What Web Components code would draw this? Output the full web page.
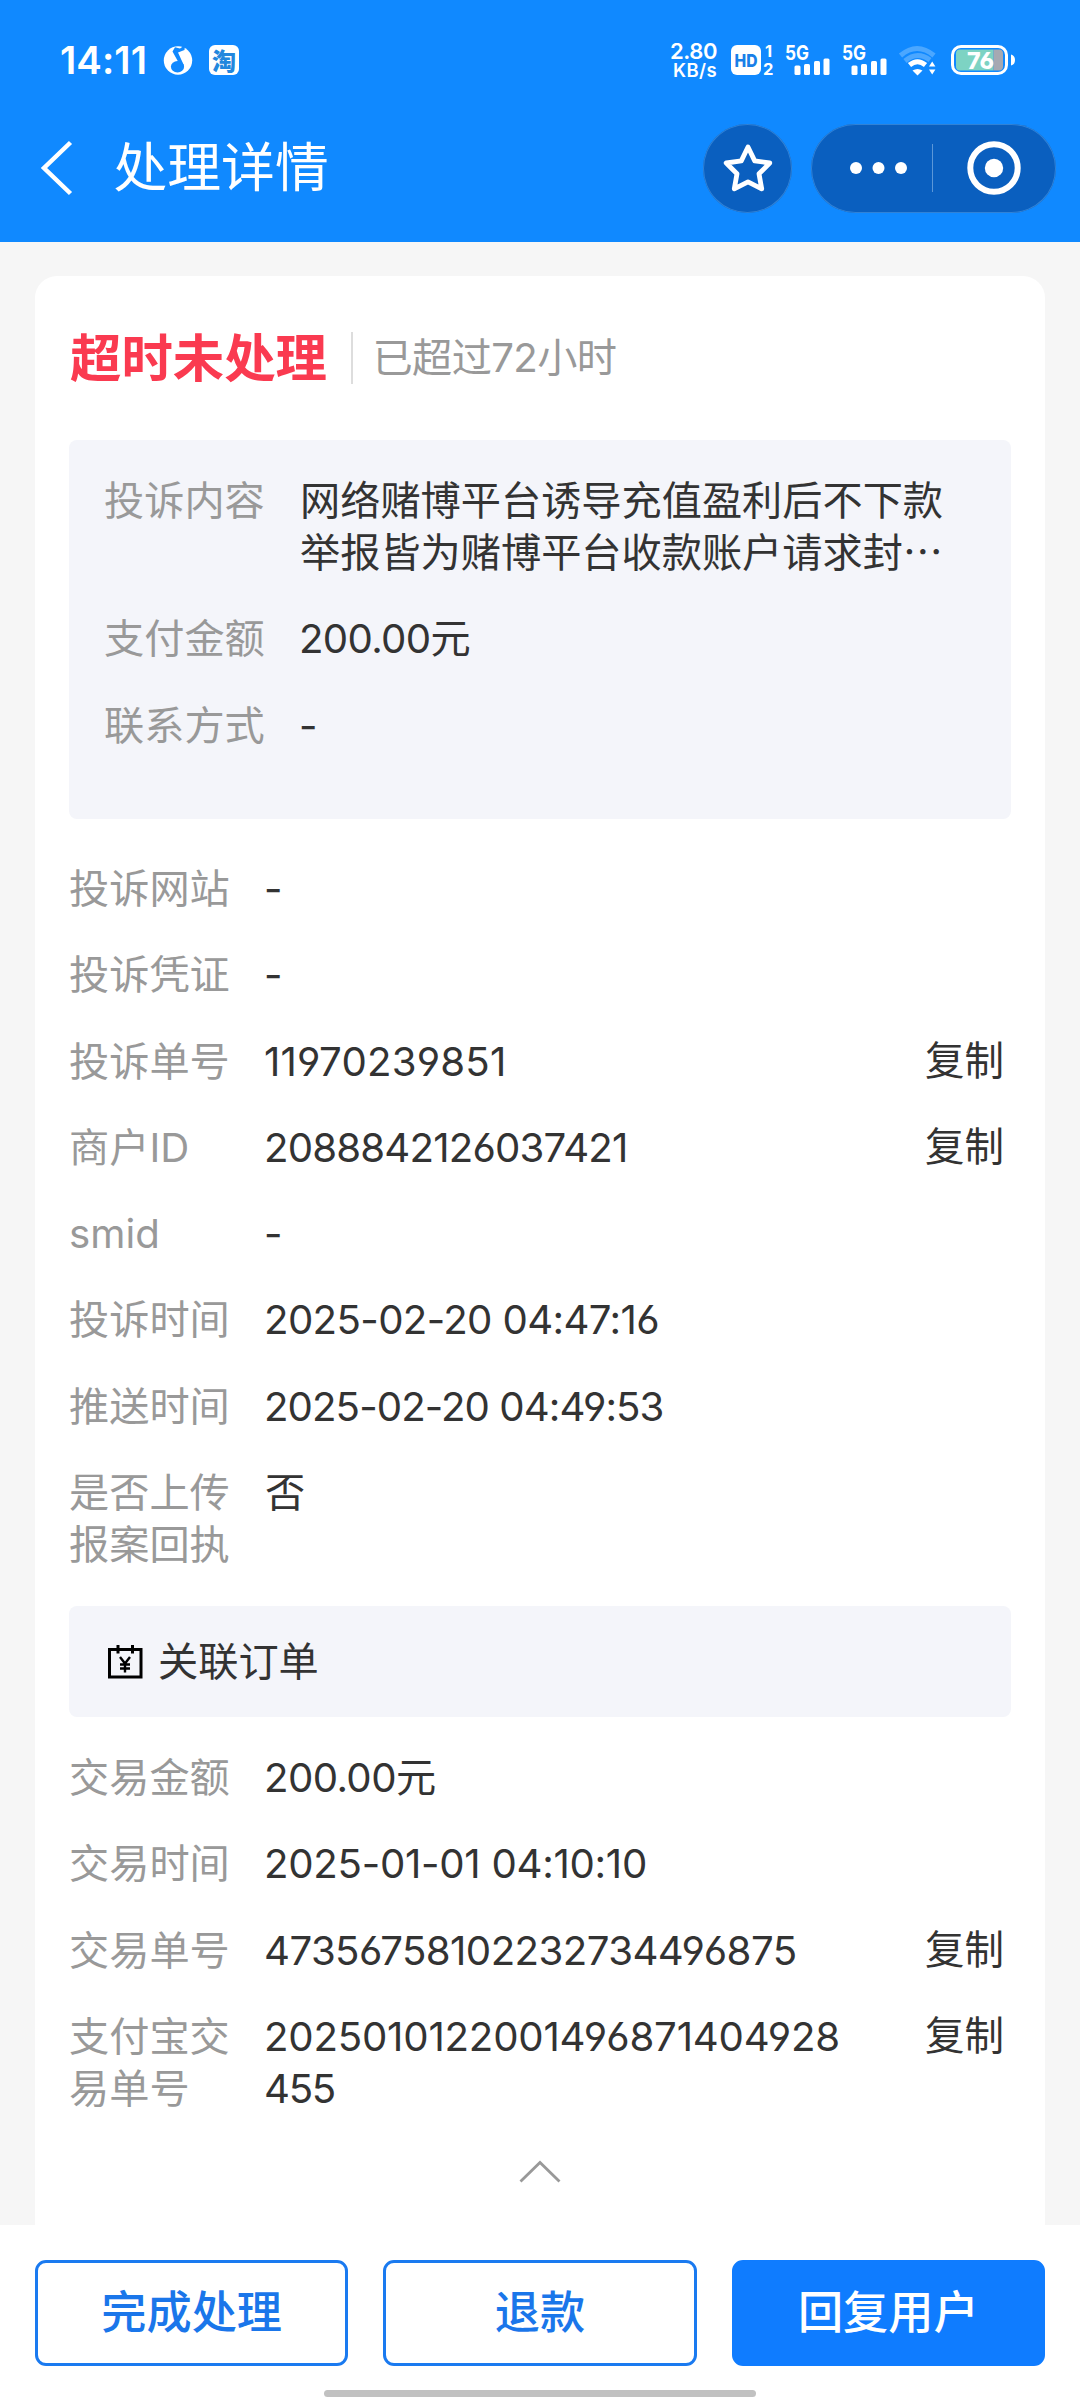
<!DOCTYPE html>
<html lang="zh-CN">
<head>
<meta charset="utf-8">
<title>处理详情</title>
<style>
html,body{margin:0;padding:0}
body{width:1080px;height:2400px;overflow:hidden;background:#f6f6f6;color:#333;
 font-family:Inter,"Noto Sans CJK SC",sans-serif;font-size:40.2px;line-height:52px;
 font-feature-settings:"cv03","cv04";}
</style>
</head>
<body>
<detail-page></detail-page>
<script>
const define = (name, html, after) => customElements.define(name, class extends HTMLElement {
  connectedCallback() {
    if (this.shadowRoot) return;
    const t = document.createElement('template');
    t.innerHTML = typeof html === 'function' ? html(this) : html;
    this.attachShadow({mode: 'open'}).appendChild(t.content.cloneNode(true));
    if (after) after(this);
  }
});

/* One line of text whose tracking is set so that it measures w pixels */
define('tracked-text', `<style>:host{display:inline-block;white-space:nowrap;vertical-align:baseline}</style><span><slot></slot></span>`, el => {
  const s = el.shadowRoot.querySelector('span');
  const w = parseFloat(el.getAttribute('w'));
  const n = [...el.textContent].length;
  const nat = s.getBoundingClientRect().width;
  s.style.letterSpacing = ((w - nat) / n).toFixed(3) + 'px';
});

define('signal-5g', `<style>:host{display:block;width:45px;height:32px}svg{display:block;overflow:visible}</style>
<svg width="45" height="32" viewBox="0 0 45 32" fill="#fff"><text x="0" y="15.5" font-family="Inter" font-weight="700" font-size="20" textLength="24" lengthAdjust="spacingAndGlyphs">5G</text>
<rect x="9.5" y="21.500" width="6" height="9.500" rx="1.500"/><rect x="19" y="20" width="6" height="11" rx="1.500"/><rect x="29" y="17" width="6" height="14" rx="1.500"/><rect x="38.500" y="14.500" width="6" height="16.500" rx="1.500"/></svg>`);

define('status-bar', `<style>
:host{display:flex;height:120px;box-sizing:border-box;padding:44px 64px 0 60px;color:#fff;align-items:flex-start}
svg{display:block;flex:none;overflow:visible}
.time{font-weight:600;font-size:38.5px;line-height:32px;width:87px}
.music{margin-left:16px}
.tao{margin:1px 0 0 16px;width:30px;height:30px;border-radius:6px;background:#fff;color:#2387dd;font:900 24px/30px "Noto Sans CJK SC",sans-serif;text-align:center}
.speed{margin-left:auto;width:47px;margin-top:-4px;display:flex;flex-direction:column;align-items:flex-end;font-weight:600}
.speed tracked-text{display:block;font-size:22px;line-height:22px}
.speed tracked-text+tracked-text{font-size:18.500px;line-height:16px}
.hd{margin-left:14px}.s1{margin-left:11px}.s2{margin-left:12px}.wifi{margin-left:12px}.bat{margin-left:15px}
</style>
<div class="time"><tracked-text w="87">14:11</tracked-text></div>
<svg class="music" width="30" height="32" viewBox="0 0 30 32"><circle cx="15" cy="16.500" r="14.200" fill="#fff"/><g fill="#1089ff"><ellipse cx="14.500" cy="22.800" rx="6.600" ry="5.700"/><path d="M9.500 7.500L12 3.300 17 4.500 22 1 21.500 6 15 8.500 21 21.500 18 23 15 17.500Z"/></g></svg>
<div class="tao">淘</div>
<div class="speed"><tracked-text w="47">2.80</tracked-text><tracked-text w="44">KB/s</tracked-text></div>
<svg class="hd" width="43" height="32" viewBox="0 0 43 32"><rect y="1" width="30" height="30" rx="6" fill="#fff"/><text x="3.500" y="22.500" font-family="Inter" font-weight="800" font-size="18" fill="#1980e8" textLength="23" lengthAdjust="spacingAndGlyphs">HD</text><g fill="#fff" font-family="Inter" font-weight="700" font-size="16.500"><text x="34" y="13">1</text><text x="32" y="31">2</text></g></svg>
<signal-5g class="s1"></signal-5g><signal-5g class="s2"></signal-5g>
<svg class="wifi" width="37" height="32" viewBox="0 0 37 32" fill="none"><g stroke="#4ba7ff" stroke-width="5"><path d="M1.500 11.500Q18 -2.500 35 11.500"/><path d="M6 17Q18 6.500 31 16"/></g><path d="M10.500 21Q18.500 14.500 26.500 21" stroke="#fff" stroke-width="5"/><path d="M13.500 26.500Q18.500 23.500 23.500 26.500L18.500 31.500Z" fill="#fff"/><path d="M30 22.500L33.200 17.500 36.400 22.500ZM30 25.500L33.200 30.500 36.400 25.500Z" fill="#fff"/></svg>
<svg class="bat" width="65" height="32" viewBox="0 0 65 32"><rect x="1.500" y="2.500" width="54" height="27" rx="8.500" fill="none" stroke="#fff" stroke-width="3"/><path d="M9 5.500H42.500V26.500H9Q5 26.500 5 22.500V9.500Q5 5.500 9 5.500Z" fill="#7dd3c3"/><path d="M42.500 5.500H48Q52 5.500 52 9.500V22.500Q52 26.500 48 26.500H42.500Z" fill="#a6a9b2"/><path d="M60 10.500Q64 11.500 64 16Q64 20.500 60 21.500Z" fill="#fff"/><text x="29.500" y="24.500" text-anchor="middle" font-family="Inter" font-weight="800" font-size="23.500" textLength="27" lengthAdjust="spacingAndGlyphs" fill="#fff">76</text></svg>`);

define('title-bar', `<style>
:host{display:flex;height:96px;align-items:center;padding:0 24px 0 38px;color:#fff}
svg{display:block;flex:none}
h1{margin:0 0 0 37.500px;font-weight:400;font-size:53.8px;line-height:64px}
.disc,.pill{background:#0a5fbf;box-shadow:0 0 0 1px #3182d6 inset;height:89px;display:flex;align-items:center;box-sizing:border-box}
.disc{width:89px;border-radius:50%;margin-left:auto;justify-content:center}
.pill{width:245px;border-radius:45px;margin-left:19px;padding-left:39px}
.sep{width:1px;height:48px;background:#5b97d8;margin:0 34px 0 25px}
</style>
<svg width="38" height="56" viewBox="0 0 38 56" fill="none" stroke="#fff" stroke-width="4.500"><path d="M32.500 2.500L6 28L32.500 53.500"/></svg>
<h1>处理详情</h1>
<div class="disc"><svg width="56" height="56" viewBox="0 0 56 56" fill="none" stroke="#fff" stroke-width="4.800" stroke-linejoin="round"><path d="M28 5L34.700 18.900 49.800 21 39 31.800 41.700 46.800 28 39.800 14.300 46.800 17 31.800 6.200 21 21.300 18.900Z" transform="translate(0 2)"/></svg></div>
<div class="pill"><svg width="57" height="14" viewBox="0 0 57 14" fill="#fff"><circle cx="6" cy="7" r="6"/><circle cx="28.500" cy="7" r="6"/><circle cx="51" cy="7" r="6"/></svg><i class="sep"></i><svg width="54" height="54" viewBox="0 0 54 54"><circle cx="27" cy="27" r="23.700" fill="none" stroke="#fff" stroke-width="6"/><circle cx="27" cy="27" r="9.200" fill="#fff"/></svg></div>`);

define('info-row', el => `<style>
:host{display:flex;align-items:flex-start;color:#333}
.label{width:162px;margin-right:34px;color:#999;flex:none;word-break:break-all}
.copy{margin:-1px 7px 0 auto;font-size:39.500px}
::slotted(tracked-text){margin-left:-1px}
</style><div class="label">${el.getAttribute('label')}</div><div class="value"><slot></slot></div>${el.hasAttribute('copy') ? '<div class="copy">复制</div>' : ''}`);

define('row-list', `<style>:host{display:flex;flex-direction:column;gap:34.300px}</style><slot></slot>`);
define('grey-panel', `<style>:host{display:block;box-sizing:border-box;background:#f4f5fa;border-radius:8px}</style><slot></slot>`);

define('status-heading', `<style>
:host{display:flex;height:164px;box-sizing:border-box;padding-bottom:1px;align-items:center}
b{font-weight:700;font-size:51.400px;line-height:60px;color:#fa3a50;margin-left:1px}
i{width:2.500px;height:52px;background:#ddd;margin:0 19px 0 24px}
span{color:#999}
</style><b>超时未处理</b><i></i><span><tracked-text w="244">已超过72小时</tracked-text></span>`);

define('action-button', `<style>
:host{display:flex;flex:1;height:106px;box-sizing:border-box;align-items:center;justify-content:center;border:3px solid #1a7af0;border-radius:11px;font-size:45.200px;font-weight:500;color:#1a76ea;background:#fff}
:host([primary]){background:#0f7cff;border-color:#0f7cff;color:#fff}
</style><slot></slot>`);

define('action-bar', `<style>
:host{display:block;height:175px;background:#fff;flex:none}
.row{display:flex;gap:35px;padding:35px 35px 0}
.home{width:432px;height:7px;border-radius:4px;background:#c1c1c1;margin:24px auto 0}
</style><div class="row"><action-button>完成处理</action-button><action-button>退款</action-button><action-button primary>回复用户</action-button></div><div class="home"></div>`);

define('detail-page', `<style>
:host{display:flex;flex-direction:column;height:2400px}
header{height:242px;background:#1089ff;flex:none}
main{flex:1;min-height:0;padding:34px 35px 0;display:flex}
section{flex:1;background:#fff;border-radius:22px 22px 0 0;padding:0 34px;box-sizing:border-box;min-width:0}
.complaint{height:379px;padding:35px 30px 0 35px}
.first{margin-top:44px}
.order{height:111px;margin-top:35px;padding-left:37px;display:flex;align-items:center;gap:14px}
.order span{padding-top:1px}
.second{margin-top:35px}
.dots{font-family:"Noto Sans CJK SC";line-height:1}
.up{display:block;margin:44px auto 0}
svg{display:block}
</style>
<header><status-bar></status-bar><title-bar></title-bar></header>
<main><section>
<status-heading></status-heading>
<grey-panel class="complaint"><row-list>
<info-row label="投诉内容">网络赌博平台诱导充值盈利后不下款<br>举报皆为赌博平台收款账户请求封<span class="dots">…</span></info-row>
<info-row label="支付金额"><tracked-text w="171">200.00元</tracked-text></info-row>
<info-row label="联系方式"><tracked-text w="18">-</tracked-text></info-row>
</row-list></grey-panel>
<row-list class="first">
<info-row label="投诉网站"><tracked-text w="18">-</tracked-text></info-row>
<info-row label="投诉凭证"><tracked-text w="18">-</tracked-text></info-row>
<info-row label="投诉单号" copy><tracked-text w="242.500">11970239851</tracked-text></info-row>
<info-row label="商户ID" copy><tracked-text w="363.500">2088842126037421</tracked-text></info-row>
<info-row label="smid"><tracked-text w="18">-</tracked-text></info-row>
<info-row label="投诉时间"><tracked-text w="395">2025-02-20 04:47:16</tracked-text></info-row>
<info-row label="推送时间"><tracked-text w="399.500">2025-02-20 04:49:53</tracked-text></info-row>
<info-row label="是否上传报案回执">否</info-row>
</row-list>
<grey-panel class="order" style="display:flex"><svg width="38" height="38" viewBox="0 0 38 38" fill="none" stroke="#000" stroke-width="3"><path d="M3.500 6.500H35V34H3.500ZM12 2V10.500M26.500 2V10.500"/><path d="M14 14L19 20.500L24 14M19 20V29.500M14 21.500H24M14 25.500H24" stroke-width="2.400"/></svg><span>关联订单</span></grey-panel>
<row-list class="second">
<info-row label="交易金额"><tracked-text w="171.500">200.00元</tracked-text></info-row>
<info-row label="交易时间"><tracked-text w="383">2025-01-01 04:10:10</tracked-text></info-row>
<info-row label="交易单号" copy><tracked-text w="532.500">47356758102232734496875</tracked-text></info-row>
<info-row label="支付宝交易单号" copy><tracked-text w="576">2025010122001496871404928</tracked-text><br><tracked-text w="71">455</tracked-text></info-row>
</row-list>
<svg class="up" width="44" height="26" viewBox="0 0 44 26" fill="none" stroke="#999" stroke-width="2.800"><path d="M2.500 22.500L22 3.500L41.500 22.500"/></svg>
</section></main>
<action-bar></action-bar>`);
</script>
</body>
</html>
